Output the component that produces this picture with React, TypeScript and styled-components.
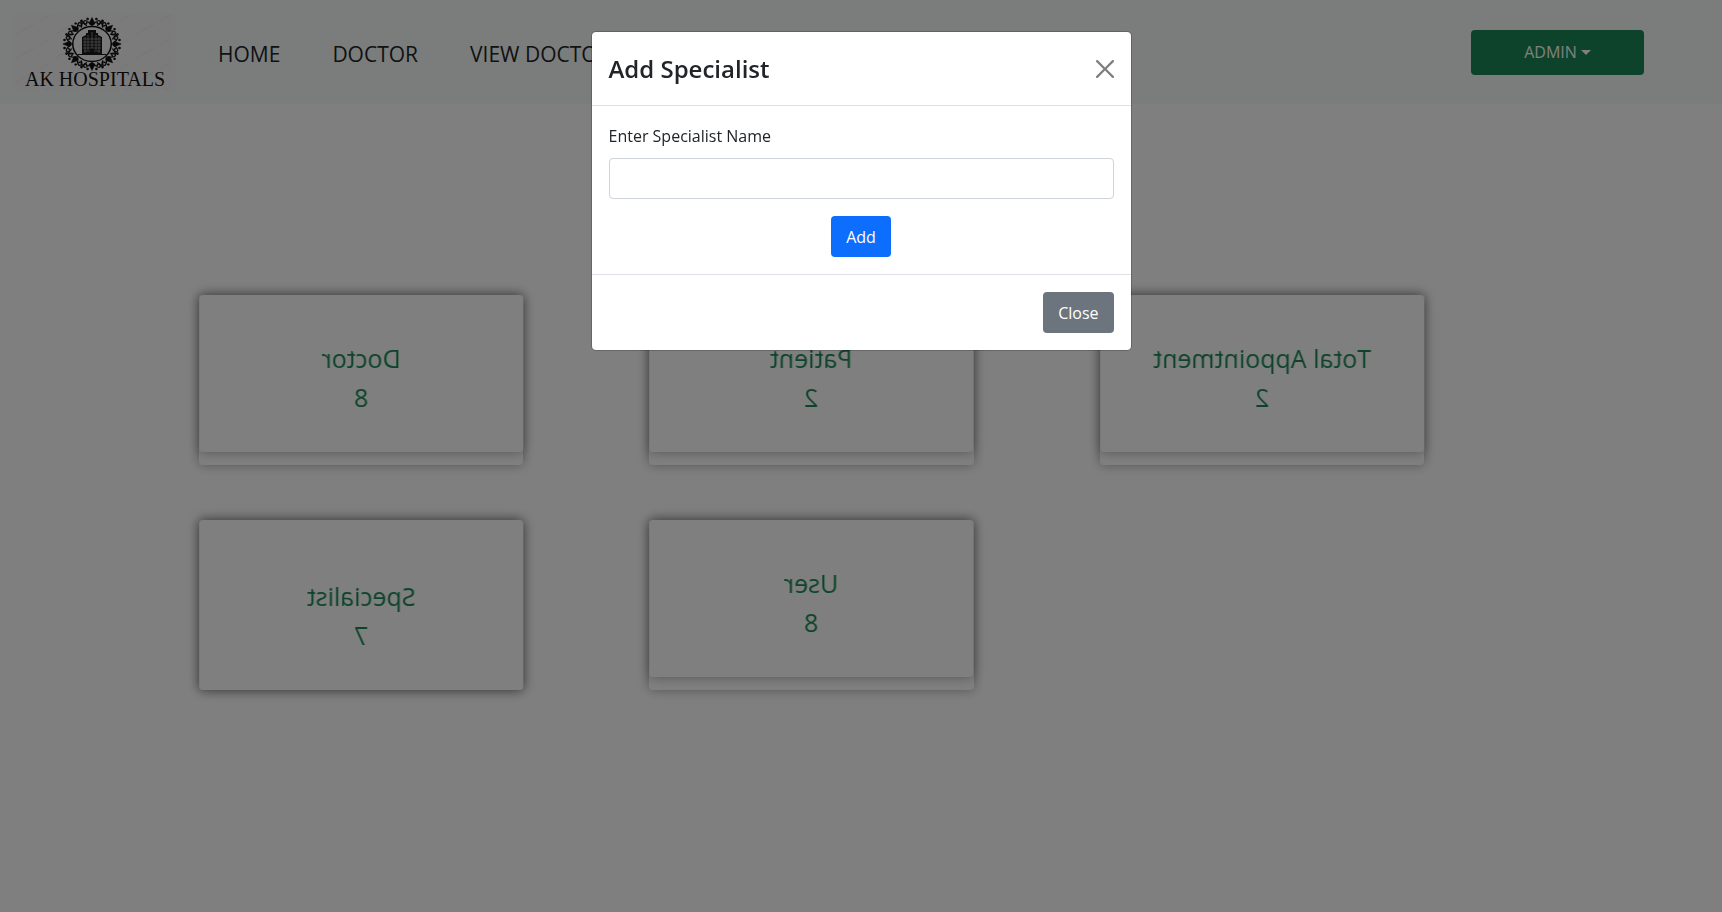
import React from "react";
import styled, { createGlobalStyle } from "styled-components";

const GlobalStyle = createGlobalStyle`
  *, *::before, *::after { box-sizing: border-box; }
  body {
    margin: 0;
    background: #fff;
    color: #212529;
    font-family: "Open Sans", "Noto Sans", sans-serif;
    font-size: 16px;
    line-height: 26px;
  }
`;

const Page = styled.div`
  min-height: 100vh;
`;

const Navbar = styled.header`
  display: flex;
  align-items: center;
  padding: 14px 78px 14px 12px;
  background: #f6fbf8;
`;

const Brand = styled.a`
  display: block;
  height: 76px;
  background: #f8f7f8;
  svg { display: block; }
`;

const NavLinks = styled.nav`
  display: flex;
  flex: 1;
  gap: 52px;
  margin-left: 43px;
  padding-top: 3px;
`;

const NavLink = styled.a`
  color: #212529;
  font-size: 21px;
  line-height: 32px;
  text-decoration: none;
`;

const AdminButton = styled.button`
  display: flex;
  align-items: center;
  justify-content: center;
  gap: 4px;
  width: 173px;
  height: 45px;
  border: 0;
  border-radius: 4px;
  background: #198754;
  color: #fff;
  font: inherit;
`;

const Caret = styled.span`
  border-top: 5px solid;
  border-right: 5px solid transparent;
  border-left: 5px solid transparent;
`;

const CardGrid = styled.main`
  display: grid;
  grid-template-columns: repeat(3, 1fr);
  gap: 55px 126px;
  padding: 191px 298px 40px 199px;
`;

const Card = styled.article`
  height: 170px;
  border-radius: 4px;
  background: #fff;
  box-shadow: 0 0 12px rgba(0, 0, 0, 0.35);
`;

const CardFace = styled.div<{ $tall?: boolean }>`
  padding: ${(p) => (p.$tall ? "57px 0 35px" : "44px 0 35px")};
  border-radius: 4px;
  background: #fff;
  box-shadow: 0 0 12px rgba(0, 0, 0, 0.35);
  color: #198754;
  font-size: 25px;
  line-height: 39px;
  text-align: center;
  transform: rotateY(180deg);
`;

const CardText = styled.p`
  margin: 0;
`;

const Backdrop = styled.div`
  position: fixed;
  inset: 0;
  display: flex;
  align-items: flex-start;
  justify-content: center;
  padding-top: 31px;
  background: rgba(0, 0, 0, 0.5);
`;

const Dialog = styled.section`
  width: 541px;
  max-width: 100%;
  border: 1px solid rgba(0, 0, 0, 0.2);
  border-radius: 5px;
  background: #fff;
  background-clip: padding-box;
`;

const DialogHeader = styled.div`
  display: flex;
  align-items: center;
  justify-content: space-between;
  padding: 17px;
  border-bottom: 1px solid #dee2e6;
`;

const DialogTitle = styled.h2`
  margin: 0;
  font-size: 24px;
  font-weight: 600;
  line-height: 39px;
`;

const IconButton = styled.button`
  padding: 0;
  border: 0;
  background: none;
  opacity: 0.5;
  svg { display: block; }
`;

const DialogForm = styled.form`
  display: flex;
  flex-direction: column;
  padding: 17px;
`;

const Label = styled.label`
  margin-bottom: 9px;
`;

const TextInput = styled.input`
  width: 100%;
  height: 41px;
  margin-bottom: 17px;
  padding: 0 13px;
  border: 1px solid #ced4da;
  border-radius: 4px;
  background: #fff;
  font: inherit;
`;

const Button = styled.button<{ $color: string }>`
  align-self: center;
  height: 41px;
  padding: 0 15px;
  border: 0;
  border-radius: 4px;
  background: ${(p) => p.$color};
  color: #fff;
  font: inherit;
`;

const DialogFooter = styled.div`
  display: flex;
  justify-content: flex-end;
  padding: 17px;
  border-top: 1px solid #dee2e6;
`;

const LogoText = styled.text`
  font-family: "Liberation Serif", serif;
  font-size: 20px;
`;

const steps = (n: number) => Array.from({ length: n }, (_, i) => (i * 360) / n);

const Logo = () => (
  <svg width="163" height="76" viewBox="0 0 163 76" role="img" aria-label="AK Hospitals">
    <defs>
      <pattern id="streaks" width="40" height="24" patternUnits="userSpaceOnUse">
        <path d="M4 20 L22 10 M26 8 L38 1" stroke="#f1f0f1" strokeWidth="2" />
      </pattern>
    </defs>
    <rect width="163" height="76" fill="url(#streaks)" />
    <g transform="translate(80 30) scale(1.1 1)" stroke="#111" fill="none">
      <circle r="17.5" strokeWidth="1.4" />
      {steps(8).map((a) => (
        <g key={a} transform={`rotate(${a})`}>
          <path d="M0 -18 L-2.6 -21 L0 -26.5 L2.6 -21 Z" fill="#111" strokeWidth="0.5" />
          <path d="M-1 -19 C-4 -24 -8 -24.500 -7.500 -21.500 C-6.500 -19 -4 -20 -5 -22" strokeWidth="1.3" />
          <path d="M1 -19 C4 -24 8 -24.500 7.500 -21.500 C6.500 -19 4 -20 5 -22" strokeWidth="1.3" />
          <circle cx="-4" cy="-25" r="1.200" fill="#111" stroke="none" />
          <circle cx="4" cy="-25" r="1.200" fill="#111" stroke="none" />
        </g>
      ))}
      {steps(8).map((a) => (
        <g key={a} transform={`rotate(${a + 22.5})`}>
          <path d="M-3 -19 C-1 -20 -1 -22 0 -24 C1 -22 1 -20 3 -19" strokeWidth="1.2" />
          <circle cy="-25" r="1.300" fill="#111" stroke="none" />
        </g>
      ))}
    </g>
    <g fill="#1a1a1a">
      <path d="M70 40 V23 L74 21 V19 H76 V16 H84 V19 H86 V21 L90 23 V40 Z" />
      <rect x="66" y="40" width="28" height="1" />
    </g>
    <path
      d="M71 25 H89 M71 28 H89 M71 31 H89 M71 34 H89 M72 37 H78 M82 37 H88 M73 23 V39 M87 23 V39 M76 21 V36 M84 21 V36 M80 18 V34"
      stroke="#f8f8f8"
      strokeWidth="0.6"
      opacity="0.7"
    />
    <LogoText x="83" y="72" textAnchor="middle" fill="#111">AK HOSPITALS</LogoText>
  </svg>
);

const links = ["HOME", "DOCTOR", "VIEW DOCTOR"];

const cards = [
  { name: "Doctor", count: 8 },
  { name: "Patient", count: 2 },
  { name: "Total Appointment", count: 2 },
  { name: "Specialist", count: 7, tall: true },
  { name: "User", count: 8 },
];

export default function App() {
  return (
    <>
      <GlobalStyle />
      <Page>
        <Navbar>
          <Brand href="#"><Logo /></Brand>
          <NavLinks>
            {links.map((l) => <NavLink key={l} href="#">{l}</NavLink>)}
          </NavLinks>
          <AdminButton type="button">ADMIN<Caret /></AdminButton>
        </Navbar>
        <CardGrid>
          {cards.map((c) => (
            <Card key={c.name}>
              <CardFace $tall={c.tall}>
                <CardText>{c.name}</CardText>
                <CardText>{c.count}</CardText>
              </CardFace>
            </Card>
          ))}
        </CardGrid>
      </Page>
      <Backdrop>
        <Dialog role="dialog" aria-modal="true" aria-labelledby="dialog-title">
          <DialogHeader>
            <DialogTitle id="dialog-title">Add Specialist</DialogTitle>
            <IconButton type="button" aria-label="Close dialog">
              <svg width="18" height="18" viewBox="0 0 16 16" fill="#000">
                <path d="M.293.293a1 1 0 011.414 0L8 6.586 14.293.293a1 1 0 111.414 1.414L9.414 8l6.293 6.293a1 1 0 01-1.414 1.414L8 9.414l-6.293 6.293a1 1 0 01-1.414-1.414L6.586 8 .293 1.707a1 1 0 010-1.414z" />
              </svg>
            </IconButton>
          </DialogHeader>
          <DialogForm onSubmit={(e: React.FormEvent) => e.preventDefault()}>
            <Label htmlFor="specialist-name">Enter Specialist Name</Label>
            <TextInput id="specialist-name" type="text" />
            <Button type="submit" $color="#0d6efd">Add</Button>
          </DialogForm>
          <DialogFooter>
            <Button type="button" $color="#6c757d">Close</Button>
          </DialogFooter>
        </Dialog>
      </Backdrop>
    </>
  );
}
